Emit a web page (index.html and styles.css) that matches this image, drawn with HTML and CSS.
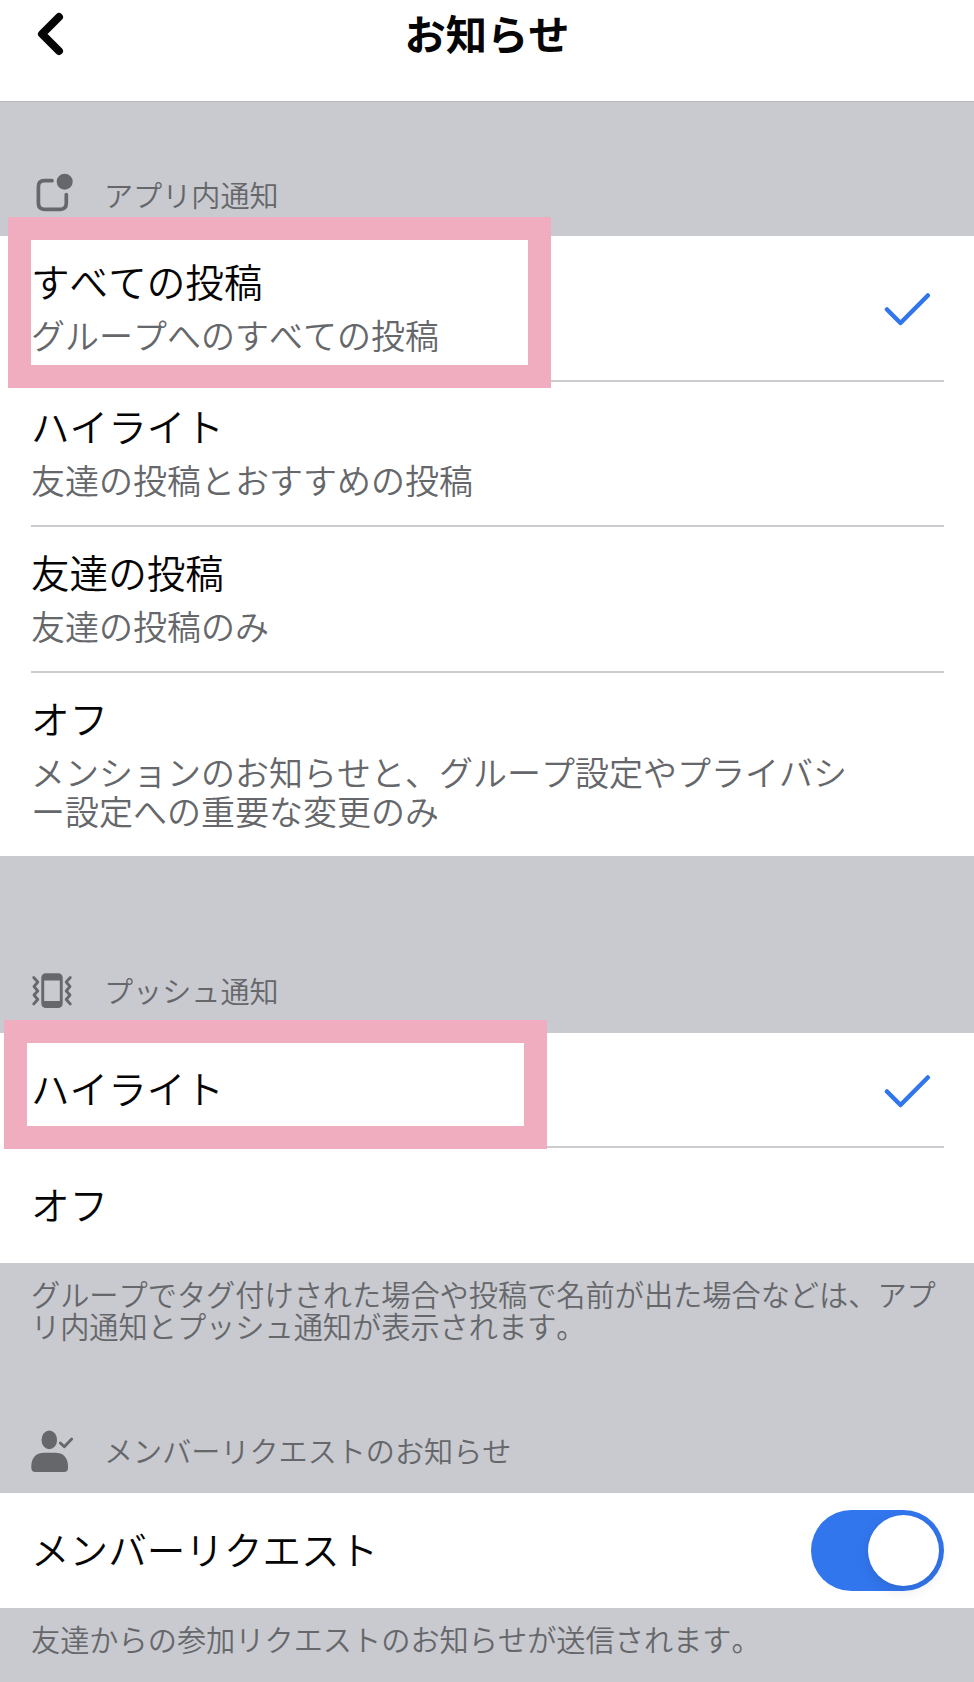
FILE: index.html
```html
<!DOCTYPE html>
<html lang="ja">
<head>
    <meta charset="UTF-8">
    <meta name="viewport" content="width=device-width, initial-scale=1.0">
    <title>お知らせ</title>
    <link rel="stylesheet" href="styles.css">
</head>
<body>
    <header class="header">
        <svg class="back" width="36" height="50" viewBox="0 0 36 50"><path d="M24 9 L7 26 L24 43"/></svg>
        <h1>お知らせ</h1>
    </header>

    <div class="section-label first">
        <svg class="icon" width="44" height="44" viewBox="0 0 44 44">
            <path class="line" d="M22 9.7 H14.4 Q8.4 9.7 8.4 15.7 V32.3 Q8.4 38.3 14.4 38.3 H30.3 Q36.3 38.3 36.3 32.3 V23.5"/>
            <circle class="fill" cx="34.7" cy="10.7" r="8"/>
        </svg>
        <span>アプリ内通知</span>
    </div>
    <div class="list">
        <div class="row">
            <div class="highlight highlight-posts"></div>
            <div class="text">
                <div class="title">すべての投稿</div>
                <div class="sub">グループへのすべての投稿</div>
            </div>
            <svg class="check" width="48" height="36" viewBox="0 0 48 36"><path d="M3 19.5 L16.5 33 L43.8 5.5"/></svg>
        </div>
        <div class="row">
            <div class="text">
                <div class="title">ハイライト</div>
                <div class="sub">友達の投稿とおすすめの投稿</div>
            </div>
        </div>
        <div class="row">
            <div class="text">
                <div class="title">友達の投稿</div>
                <div class="sub">友達の投稿のみ</div>
            </div>
        </div>
        <div class="row tall">
            <div class="text">
                <div class="title">オフ</div>
                <div class="sub">メンションのお知らせと、グループ設定やプライバシ<br>ー設定への重要な変更のみ</div>
            </div>
        </div>
    </div>

    <div class="section-label push">
        <svg class="icon" width="44" height="44" viewBox="0 0 44 44">
            <rect class="fill" x="11.3" y="5.3" width="21.4" height="34.7" rx="4.5"/>
            <rect class="screen" x="14.2" y="12.5" width="15.6" height="20.5"/>
            <path class="zigzag" d="M3.7 9.5 L7.8 14 L4 18.5 L7.8 23 L4 27 L7.8 31.5 L3.7 36"/>
            <path class="zigzag" d="M40.3 9.5 L36.2 14 L40 18.5 L36.2 23 L40 27 L36.2 31.5 L40.3 36"/>
        </svg>
        <span>プッシュ通知</span>
    </div>
    <div class="list">
        <div class="row short">
            <div class="highlight highlight-push"></div>
            <div class="title">ハイライト</div>
            <svg class="check" width="48" height="36" viewBox="0 0 48 36"><path d="M3 19.5 L16.5 33 L43.8 5.5"/></svg>
        </div>
        <div class="row short">
            <div class="title">オフ</div>
        </div>
    </div>
    <p class="note">グループでタグ付けされた場合や投稿で名前が出た場合などは、アプ<br>リ内通知とプッシュ通知が表示されます。</p>

    <div class="section-label member">
        <svg class="icon" width="44" height="44" viewBox="0 0 44 44">
            <rect class="fill" x="11.6" y="2.6" width="15.4" height="18.6" rx="7.7" ry="8.8"/>
            <path class="fill" d="M1.3 38 C1.3 29 7 24.7 14 24.7 H25.5 C32.5 24.7 38 29 38 38 V40 Q38 44 34 44 H5.3 Q1.3 44 1.3 40 Z"/>
            <path class="zigzag" d="M30.3 15 L34.3 18.8 L41.7 11"/>
        </svg>
        <span>メンバーリクエストのお知らせ</span>
    </div>
    <div class="list">
        <div class="row short">
            <div class="title">メンバーリクエスト</div>
            <div class="toggle"><div class="knob"></div></div>
        </div>
    </div>
    <p class="note">友達からの参加リクエストのお知らせが送信されます。</p>
</body>
</html>
```
FILE: styles.css
```css
* {
    box-sizing: border-box;
}
body {
    margin: 0;
    height: 1682px;
    overflow: hidden;
    background-color: #c9cacf;
    font-family: "Noto Sans CJK JP", sans-serif;
    font-weight: 350;
    font-kerning: none;
    color: #050505;
}
.header {
    display: grid;
    grid-template-columns: 72px 1fr 72px;
    height: 102px;
    padding-top: 8px;
    background-color: #fff;
    border-bottom: 1px solid #b9babe;
}
.header h1 {
    margin: 0;
    font-size: 41.3px;
    line-height: 48px;
    font-weight: 600;
    text-align: center;
}
.back {
    margin-left: 35px;
    fill: none;
    stroke: #050505;
    stroke-width: 8;
    stroke-linecap: round;
    stroke-linejoin: round;
}
.section-label {
    display: flex;
    align-items: flex-end;
    gap: 30px;
    padding: 0 30px 19px;
    font-size: 29.1px;
    line-height: 48px;
    color: #65676b;
}
.section-label.first {
    height: 134px;
    padding-bottom: 18px;
}
.section-label.push {
    height: 177px;
}
.section-label.member {
    height: 145px;
}
.icon {
    margin-bottom: 2px;
}
.first .icon {
    margin-bottom: 3px;
}
.icon .fill {
    fill: #65676b;
}
.icon .screen {
    fill: #c9cacf;
}
.icon .line {
    fill: none;
    stroke: #65676b;
    stroke-width: 3.7;
    stroke-linecap: round;
}
.icon .zigzag {
    fill: none;
    stroke: #65676b;
    stroke-width: 2.8;
    stroke-linecap: round;
    stroke-linejoin: round;
}
.list {
    background-color: #fff;
}
.row {
    position: relative;
    display: flex;
    align-items: center;
    justify-content: space-between;
    height: 145.5px;
    margin: 0 30px 0 31px;
    border-bottom: 2px solid #cbccd0;
}
.row:last-child {
    border-bottom: none;
}
.row.tall {
    height: 183.5px;
}
.row.short {
    height: 115px;
}
.text {
    padding-bottom: 9px;
}
.title {
    font-size: 38.6px;
    line-height: 54px;
}
.short .title {
    padding-bottom: 6px;
}
.sub {
    font-size: 34px;
    line-height: 39px;
    margin-top: 8px;
    color: #65676b;
}
.check {
    margin-right: 12px;
    fill: none;
    stroke: #3276ee;
    stroke-width: 4.5;
    stroke-linecap: round;
    stroke-linejoin: round;
}
/* pink frames drawn over the recommended choices */
.highlight {
    position: absolute;
    width: 543px;
    border: 23px solid #efadbf;
}
.highlight-posts {
    left: -23px;
    top: -19px;
    height: 171px;
}
.highlight-push {
    left: -27px;
    top: -13px;
    height: 129px;
}
.note {
    margin: 0;
    padding: 15px 0 0 31px;
    font-size: 29.2px;
    line-height: 31.5px;
    height: 85px;
    color: #65676b;
    white-space: nowrap;
}
.toggle {
    display: flex;
    align-items: center;
    justify-content: flex-end;
    width: 133px;
    height: 81px;
    padding-right: 5px;
    border-radius: 41px;
    background-color: #3276ee;
}
.knob {
    width: 71px;
    height: 71px;
    border-radius: 50%;
    background-color: #fff;
    box-shadow: 0 4px 14px rgba(0, 0, 0, 0.12);
}
```
